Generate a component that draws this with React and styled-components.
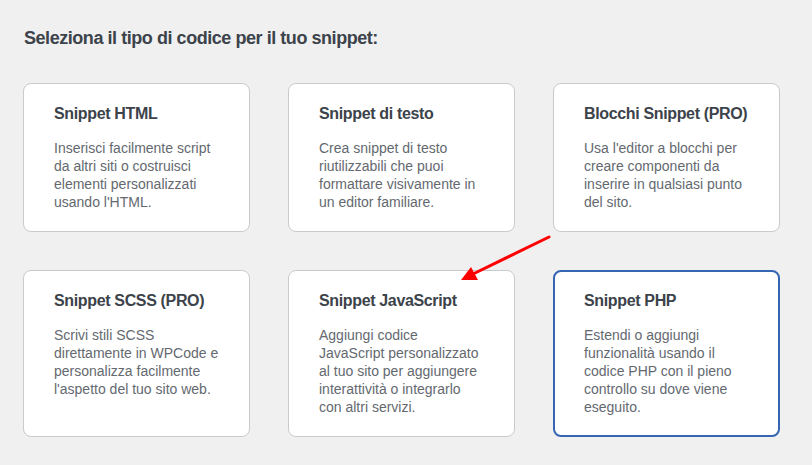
import React from 'react';
import styled, { createGlobalStyle } from 'styled-components';

const GlobalStyle = createGlobalStyle`
  html, body {
    margin: 0;
    padding: 0;
    background: #f0f0f1;
  }
  body {
    font-family: "Liberation Sans", Arial, sans-serif;
  }
`;

const Page = styled.div`
  position: relative;
  width: 812px;
  height: 465px;
  padding: 26px 32px 0 23px;
  box-sizing: border-box;
  background: #f0f0f1;
  overflow: hidden;
`;

const Heading = styled.h2`
  margin: 0 0 33px 1px;
  font-size: 18px;
  line-height: 24px;
  font-weight: 600;
  letter-spacing: -0.45px;
  color: #3c434a;
`;

const Grid = styled.div`
  display: grid;
  grid-template-columns: repeat(3, 227px);
  column-gap: 38px;
  row-gap: 38px;
`;

const Card = styled.div`
  background: #fff;
  border: ${(p) => (p.$selected ? '2px solid #3565b3' : '1px solid #c9cacd')};
  border-radius: 8px;
  padding: ${(p) => (p.$selected ? '19px 29px 19px 29px' : '20px 30px')};
  box-sizing: border-box;
`;

const Title = styled.h3`
  margin: 0 0 15px;
  font-size: 16px;
  line-height: 20px;
  font-weight: 600;
  letter-spacing: -0.35px;
  white-space: nowrap;
  color: #3c434a;
`;

const Description = styled.p`
  margin: 0;
  font-size: 14px;
  line-height: 18px;
  color: #646970;
`;

const Arrow = styled.svg`
  position: absolute;
  left: 455px;
  top: 230px;
  pointer-events: none;
`;

const snippets = [
  {
    title: 'Snippet HTML',
    text: ['Inserisci facilmente script', 'da altri siti o costruisci', 'elementi personalizzati', "usando l'HTML."],
  },
  {
    title: 'Snippet di testo',
    text: ['Crea snippet di testo', 'riutilizzabili che puoi', 'formattare visivamente in', 'un editor familiare.'],
  },
  {
    title: 'Blocchi Snippet (PRO)',
    text: ["Usa l'editor a blocchi per", 'creare componenti da', 'inserire in qualsiasi punto', 'del sito.'],
  },
  {
    title: 'Snippet SCSS (PRO)',
    text: ['Scrivi stili SCSS', 'direttamente in WPCode e', 'personalizza facilmente', "l'aspetto del tuo sito web."],
  },
  {
    title: 'Snippet JavaScript',
    text: ['Aggiungi codice', 'JavaScript personalizzato', 'al tuo sito per aggiungere', 'interattività o integrarlo', 'con altri servizi.'],
  },
  {
    title: 'Snippet PHP',
    text: ['Estendi o aggiungi', 'funzionalità usando il', 'codice PHP con il pieno', 'controllo su dove viene', 'eseguito.'],
    selected: true,
  },
];

const App = () => (
  <>
    <GlobalStyle />
    <Page>
      <Heading>Seleziona il tipo di codice per il tuo snippet:</Heading>
      <Grid>
        {snippets.map((s) => (
          <Card key={s.title} $selected={s.selected}>
            <Title>{s.title}</Title>
            <Description>
              {s.text.map((line, i) => (
                <React.Fragment key={i}>
                  {line}
                  {i < s.text.length - 1 && <br />}
                </React.Fragment>
              ))}
            </Description>
          </Card>
        ))}
      </Grid>
      <Arrow width="100" height="56" viewBox="0 0 100 56">
        <line x1="94" y1="7" x2="16" y2="45" stroke="#ff0000" strokeWidth="3" strokeLinecap="round" />
        <polygon points="6,50 16,37 23,50" fill="#ff0000" />
      </Arrow>
    </Page>
  </>
);

export default App;
